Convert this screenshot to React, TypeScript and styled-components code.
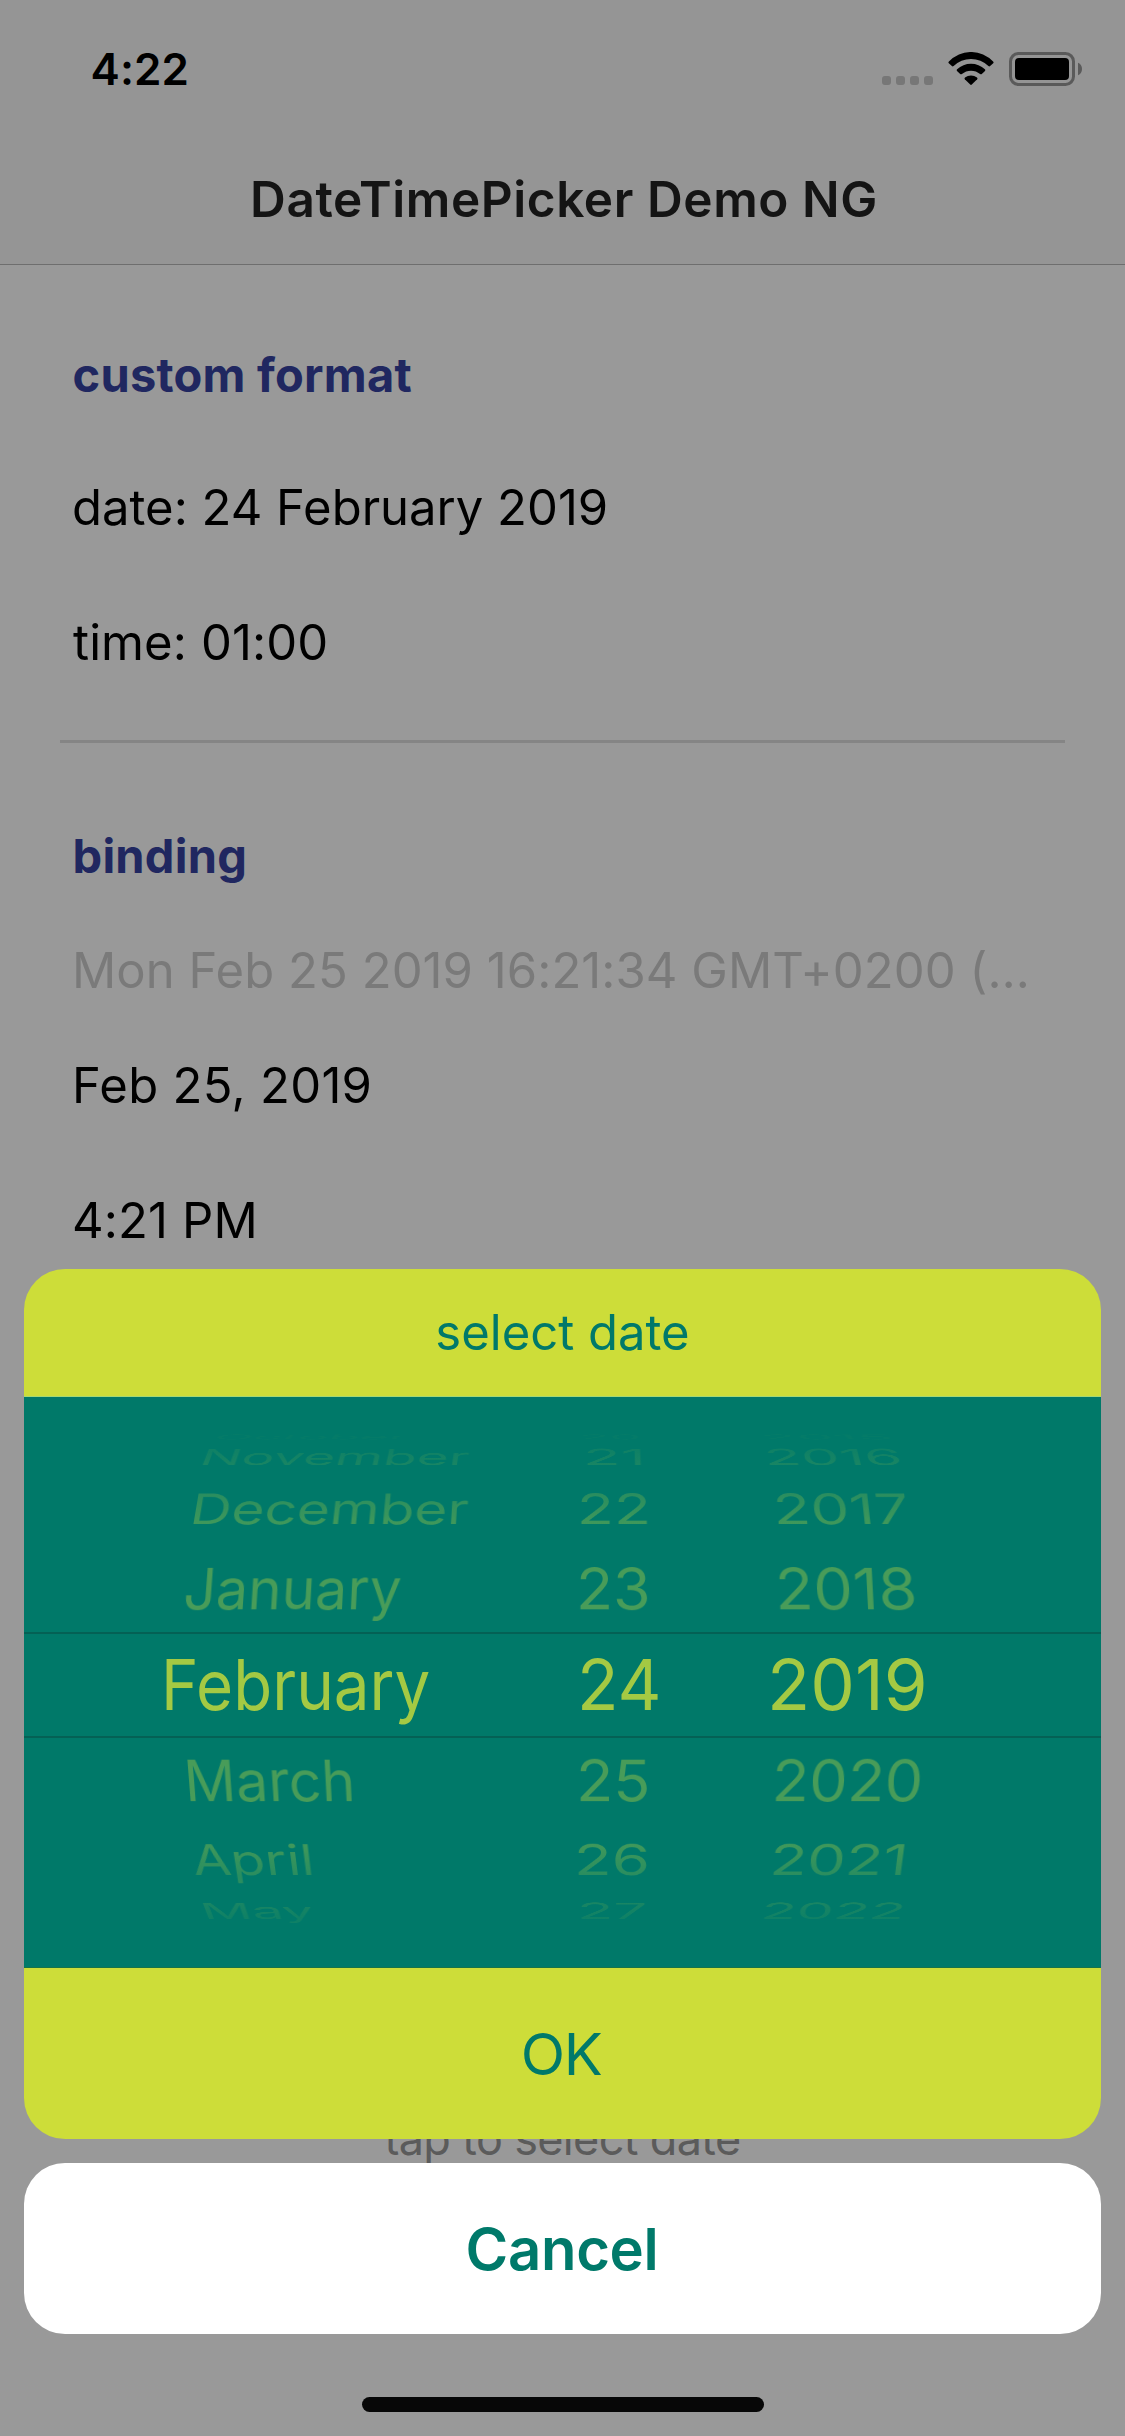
import React from 'react';
import styled, { createGlobalStyle } from 'styled-components';

const GlobalStyle = createGlobalStyle`
  * { box-sizing: border-box; }
  body { margin: 0; background: #999999; }
`;

const Screen = styled.div`
  position: relative;
  width: 1125px;
  height: 2436px;
  overflow: hidden;
  background: #999999;
  color: #000000;
  font-family: Inter, Roboto, sans-serif;
  white-space: nowrap;
`;

/* Status bar and navigation bar */

const TopBar = styled.header`
  height: 265px;
  background: #959595;
  border-bottom: 1px solid #6e6e6e;
`;

const StatusBar = styled.div`
  display: flex;
  align-items: center;
  justify-content: space-between;
  height: 138px;
  padding: 0 43px 0 90.5px;
`;

const Clock = styled.span`
  font-size: 44px;
  font-weight: 600;
  line-height: 60px;
  letter-spacing: 0.1px;
`;

const StatusIcons = styled.div`
  display: flex;
  align-items: center;
  height: 34px;
`;

const SignalDots = styled.div`
  display: flex;
  align-self: flex-end;
  gap: 5px;
  margin: 0 15px 1px 0;
`;

const Dot = styled.i`
  width: 9px;
  height: 9px;
  border-radius: 3px;
  background: #777777;
`;

const WifiIcon = styled.svg`
  width: 46px;
  height: 34px;
  margin-right: 15px;
`;

const BatteryIcon = styled.svg`
  width: 73px;
  height: 34px;
`;

const NavTitle = styled.h1`
  display: flex;
  align-items: center;
  justify-content: center;
  height: 126px;
  margin: 0;
  padding: 0 0 5px 3px;
  color: #141414;
  font-size: 49.5px;
  font-weight: 600;
  letter-spacing: 0.58px;
`;

/* Page content */

const Content = styled.main`
  display: flex;
  flex-direction: column;
  padding: 80px 60px 0;
`;

const SectionTitle = styled.h2`
  margin: 0 0 0 12.5px;
  color: #202760;
  font-size: 47px;
  font-weight: 700;
  line-height: 60px;
  letter-spacing: 0.25px;
`;

const Field = styled.div<{ $gap: number; $indent?: number; $tracking?: number; $muted?: boolean }>`
  margin: ${(p) => p.$gap}px 0 0 ${(p) => p.$indent ?? 12}px;
  color: ${(p) => (p.$muted ? '#7a7a7a' : '#000000')};
  font-size: 49px;
  line-height: 60px;
  letter-spacing: ${(p) => p.$tracking ?? 0}px;
`;

const Divider = styled.hr`
  width: 100%;
  height: 3px;
  margin: 67px 0 83px;
  border: 0;
  background: #858585;
`;

const Hint = styled.div`
  margin-top: 858px;
  color: #5b5b5b;
  font-size: 45px;
  line-height: 60px;
  letter-spacing: -0.66px;
  text-align: center;
`;

/* Action sheet */

const Overlay = styled.div`
  position: absolute;
  inset: 0;
  display: flex;
  flex-direction: column;
  justify-content: flex-end;
  align-items: center;
  padding: 0 24px 24px;
`;

const Sheet = styled.section`
  width: 100%;
  overflow: hidden;
  border-radius: 41px;
  background: #cddd39;
  color: #00796a;
`;

const SheetTitle = styled.div`
  height: 128px;
  border-bottom: 1px solid #a6d973;
  font-size: 49px;
  line-height: 128px;
  text-align: center;
`;

const SheetButton = styled.button<{ $bold?: boolean }>`
  display: block;
  width: 100%;
  height: 171px;
  margin: 0;
  padding: 0 ${(p) => (p.$bold ? 1 : 3)}px 0 0;
  border: 0;
  background: none;
  color: #00796a;
  font-family: inherit;
  font-size: 58px;
  font-weight: ${(p) => (p.$bold ? 600 : 400)};
  line-height: 173px;
  letter-spacing: ${(p) => (p.$bold ? -0.32 : -1.35)}px;
  text-align: center;
`;

const CancelSheet = styled(Sheet)`
  margin: 24px 0 63px;
  background: #ffffff;
`;

const HomeIndicator = styled.div`
  width: 402px;
  height: 15px;
  border-radius: 8px;
  background: #070707;
`;

const Wheel = styled.div`
  height: 571px;
  padding-top: 36px;
  background: #007969;
  border-bottom: 1px solid #177348;
`;

const WheelRow = styled.div<{ $height: number; $ink: string; $selected?: boolean }>`
  display: grid;
  grid-template-columns: 536px 180px 361px;
  height: ${(p) => p.$height}px;
  line-height: ${(p) => p.$height - (p.$selected ? 4 : 0)}px;
  border: 0 solid #046155;
  border-width: ${(p) => (p.$selected ? '2px 0' : '0')};
  font-size: ${(p) => (p.$selected ? 69.5 : 64)}px;

  span span {
    background: ${(p) => p.$ink};
    background-clip: text;
    -webkit-background-clip: text;
    color: transparent;
  }
`;

const Tilt = styled.span<{ $indent: number; $origin: number; $angle: number }>`
  justify-self: start;
  margin-left: ${(p) => p.$indent}px;
  transform: perspective(2800px) rotateX(${(p) => p.$angle}deg);
  transform-origin: ${(p) => p.$origin}px 50%;
`;

const Label = styled.span<{ $stretch: number }>`
  display: block;
  /* room for ascenders and descenders inside the clipped background */
  margin: -40px 0;
  padding: 40px 0;
  transform: scaleX(${(p) => p.$stretch});
  transform-origin: 0 50%;
`;

type Cell = [text: string, x: number, stretch: number];
interface Row {
  height: number;
  angle: number;
  ink: string;
  selected?: boolean;
  cells: Cell[];
}

const solid = (alpha: number) => `rgba(205, 221, 57, ${alpha})`;
const fade = (from: number, to: number) =>
  `linear-gradient(${solid(from)} calc(50% - 24px), ${solid(to)} calc(50% + 24px))`;

const COLUMN_START = [24, 560, 740];
const AXIS = 600;

const rows: Row[] = [
  { height: 8, angle: 84, ink: solid(0.018), cells: [['October', 215, 0.79], ['20', 579, 0.78], ['2015', 761, 0.91]] },
  { height: 32, angle: 70, ink: fade(0.07, 0.12), cells: [['November', 200.5, 0.855], ['21', 583, 0.964], ['2016', 764, 0.95]] },
  { height: 72, angle: 49.5, ink: fade(0.2, 0.31), cells: [['December', 190.5, 0.885], ['22', 576.5, 0.945], ['2017', 773, 0.96]] },
  { height: 87, angle: 28, ink: solid(0.35), cells: [['January', 184, 0.888], ['23', 576, 0.95], ['2018', 774.7, 0.98]] },
  { height: 106, angle: 0, ink: solid(0.8), selected: true, cells: [['February', 160.8, 0.916], ['24', 576.6, 0.98], ['2019', 766.5, 1.02]] },
  { height: 85, angle: -28, ink: solid(0.35), cells: [['March', 183.5, 0.895], ['25', 576, 0.957], ['2020', 771.5, 0.953]] },
  { height: 74, angle: -49.5, ink: fade(0.31, 0.2), cells: [['April', 191.5, 0.874], ['26', 574, 0.964], ['2021', 770, 0.955]] },
  { height: 28, angle: -70, ink: fade(0.12, 0.07), cells: [['May', 201, 0.872], ['27', 576.5, 0.93], ['2022', 760.5, 0.918]] },
];

function DateWheel() {
  return (
    <Wheel>
      {rows.map((row) => (
        <WheelRow key={row.cells[0][0]} $height={row.height} $ink={row.ink} $selected={row.selected}>
          {row.cells.map(([text, x, stretch], column) => (
            <Tilt key={text} $indent={x - COLUMN_START[column]} $origin={AXIS - x} $angle={row.angle}>
              <Label $stretch={stretch}>{text}</Label>
            </Tilt>
          ))}
        </WheelRow>
      ))}
    </Wheel>
  );
}

export default function App() {
  return (
    <>
      <GlobalStyle />
      <Screen>
        <TopBar>
          <StatusBar>
            <Clock>4:22</Clock>
            <StatusIcons>
              <SignalDots>
                <Dot />
                <Dot />
                <Dot />
                <Dot />
              </SignalDots>
              <WifiIcon viewBox="0 0 46 34">
                <path d="M0.9 9.6A30.2 30.2 0 0 1 45.1 9.6Q46 10.4 45.2 11.2L42.1 14.1Q41.3 14.8 40.4 14.1A24.6 24.6 0 0 0 5.6 14.1Q4.7 14.8 3.9 14.1L0.8 11.2Q0 10.4 0.9 9.6Z" />
                <path d="M9.1 17.3A20 20 0 0 1 36.9 17.3Q37.8 18.1 37 18.9L33.8 22Q33 22.7 32.1 22A14 14 0 0 0 13.9 22Q13 22.7 12.2 22L9 18.9Q8.2 18.1 9.1 17.3Z" />
                <path d="M17 25.6A9.6 9.6 0 0 1 29 25.6Q30 26.5 29.2 27.3L23.8 32.6Q23 33.3 22.2 32.6L16.8 27.3Q16 26.5 17 25.6Z" />
              </WifiIcon>
              <BatteryIcon viewBox="0 0 73 34">
                <rect x="1.5" y="1.5" width="63" height="31" rx="8" fill="none" stroke="#5a5a5a" strokeWidth="3" />
                <rect x="6" y="6" width="54" height="22" rx="4" />
                <path d="M69 10.7Q73 12.5 73 17T69 23.3Z" fill="#5a5a5a" />
              </BatteryIcon>
            </StatusIcons>
          </StatusBar>
          <NavTitle>DateTimePicker Demo NG</NavTitle>
        </TopBar>

        <Content>
          <SectionTitle>custom format</SectionTitle>
          <Field $gap={73}>date: 24 February 2019</Field>
          <Field $gap={75} $indent={13} $tracking={0.1}>time: 01:00</Field>
          <Divider />
          <SectionTitle>binding</SectionTitle>
          <Field $gap={55} $indent={12} $tracking={0.05} $muted>Mon Feb 25 2019 16:21:34 GMT+0200 (…</Field>
          <Field $gap={55} $indent={12} $tracking={0.3}>Feb 25, 2019</Field>
          <Field $gap={75} $indent={12} $tracking={0.15}>4:21 PM</Field>
          <Hint>tap to select date</Hint>
        </Content>

        <Overlay>
          <Sheet>
            <SheetTitle>select date</SheetTitle>
            <DateWheel />
            <SheetButton>OK</SheetButton>
          </Sheet>
          <CancelSheet>
            <SheetButton $bold>Cancel</SheetButton>
          </CancelSheet>
          <HomeIndicator />
        </Overlay>
      </Screen>
    </>
  );
}
